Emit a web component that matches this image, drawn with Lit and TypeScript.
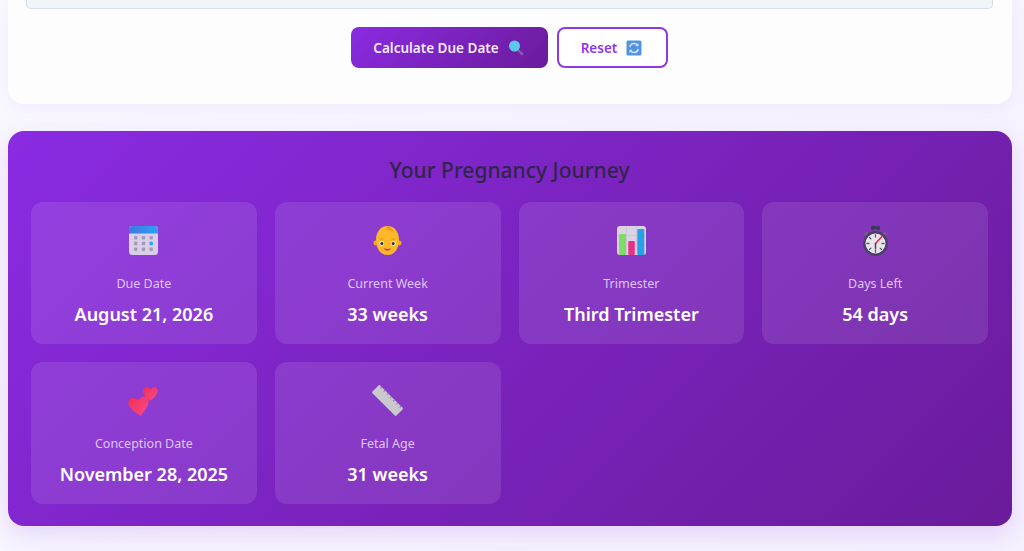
import { LitElement, html, css, svg } from "lit";
import { customElement } from "lit/decorators.js";

const heart = "M11 15.500C9 12 4.500 11 2.200 13.500C-.3 16.500 1 20.500 3.500 23.500C5.500 26 8.500 28.500 11 31C13.500 28.500 16.500 26 18.500 23.500C21 20.500 22.300 16.500 19.800 13.500C17.500 11 13 12 11 15.500z";

const icons: Record<string, unknown> = {
  calendar: svg`<svg class="ico" viewBox="0 0 31 31"><defs><linearGradient id="cb" x1="0" x2="1"><stop offset="0" stop-color="#3f78e0"/><stop offset="1" stop-color="#2ea0f5"/></linearGradient></defs><rect x="1" y="1" width="29" height="29" rx="3.500" fill="#d8cfe8"/><path d="M1 8.500V4.500A3.500 3.500 0 0 1 4.500 1h22A3.500 3.500 0 0 1 30 4.500v4z" fill="url(#cb)"/><g fill="#a79ab5"><rect x="6" y="11" width="3.400" height="3.400" rx=".7"/><rect x="13.800" y="11" width="3.400" height="3.400" rx=".7"/><rect x="21.500" y="11" width="3.400" height="3.400" rx=".7"/><rect x="6" y="16.800" width="3.400" height="3.400" rx=".7"/><rect x="13.800" y="16.800" width="3.400" height="3.400" rx=".7"/><rect x="6" y="22.500" width="3.400" height="3.400" rx=".7"/><rect x="13.800" y="22.500" width="3.400" height="3.400" rx=".7"/><rect x="21.500" y="22.500" width="3.400" height="3.400" rx=".7"/></g><rect x="21.500" y="16.800" width="3.400" height="3.400" rx=".7" fill="#2ea0f5"/></svg>`,
  baby: svg`<svg class="ico" viewBox="0 0 31 31"><circle cx="3.800" cy="18" r="2.400" fill="#f2a91e"/><circle cx="27.200" cy="18" r="2.400" fill="#f2a91e"/><path d="M15.500 1c7 0 11.500 6 11.500 14 0 9-5 15-11.500 15S4 24 4 15C4 7 8.500 1 15.500 1z" fill="#fcb827"/><path d="M15 1c3.500.8 6 3.400 6.500 7-2-2.300-4.500-3.600-8-3.700C14.500 3.500 15 2.300 15 1z" fill="#f29a18"/><circle cx="9.500" cy="18.500" r="2.400" fill="#f9f2e8"/><circle cx="21.500" cy="18.500" r="2.400" fill="#f9f2e8"/><circle cx="9.800" cy="18.500" r="1.500" fill="#3a2b2b"/><circle cx="21.200" cy="18.500" r="1.500" fill="#3a2b2b"/><path d="M7.500 14h4M19.500 14h4" stroke="#e68a2a" stroke-width=".9"/><path d="M12 23q3.500 1.800 7 0q-.8 2.800-3.500 2.800T12 23z" fill="#d8304f"/></svg>`,
  chart: svg`<svg class="ico" viewBox="0 0 31 31"><rect x="1" y="1" width="29" height="29" rx="3" fill="#d9d3e3"/><path d="M1 10.500h29M1 20h29M10.500 1v29M20.500 1v29" stroke="#c8c0d4" stroke-width=".7"/><rect x="3" y="9" width="7" height="21" rx="1" fill="#7edb63"/><rect x="12.300" y="16" width="6.500" height="14" rx="1" fill="#ea2f86"/><rect x="21.300" y="4" width="7" height="26" rx="1" fill="#27a0e8"/></svg>`,
  watch: svg`<svg class="ico" viewBox="0 0 31 31"><rect x="11" y="1" width="9" height="4" rx="1.200" fill="#3f3560"/><rect x="14" y="4" width="3" height="3.500" fill="#5a5174"/><path d="M24.500 6.500l2.500 2.500-2 2-2.500-2.500zM6.500 6.500L4 9l2 2 2.500-2.500z" fill="#6d6486"/><circle cx="15.500" cy="18.500" r="12.500" fill="#4a4068"/><circle cx="15.500" cy="18.500" r="10" fill="#e8e4ec"/><g stroke="#5c5278" stroke-width="1.300" stroke-linecap="round"><path d="M15.500 10v2M15.500 25v2M7 18.500h2M22 18.500h2M9.500 12.500l1.400 1.400M21.500 24.500l-1.400-1.400M9.500 24.500l1.400-1.400"/></g><path d="M15.500 18.500L22 11.500" stroke="#e5284f" stroke-width="1.600" stroke-linecap="round"/><path d="M15.500 18.500v5" stroke="#4a4068" stroke-width="1.500" stroke-linecap="round"/></svg>`,
  hearts: svg`<svg class="ico" viewBox="0 0 31 31"><defs><linearGradient id="hh" x1="0" y1="0" x2="1" y2="1"><stop offset="0" stop-color="#ee3050"/><stop offset="1" stop-color="#fb4a90"/></linearGradient></defs><path d=${heart} transform="translate(14.500 -6.500) scale(.72)" fill="url(#hh)"/><path d=${heart} transform="rotate(-8 11 21)" fill="url(#hh)"/></svg>`,
  ruler: svg`<svg class="ico" viewBox="0 0 31 31"><g transform="rotate(45 15.500 15.500)"><rect x="-1.500" y="10" width="34" height="11" rx="1.500" fill="#cbc7cf"/><path d="M2 10v2M6.500 10v2M11 10v2M15.500 10v2M20 10v2M24.500 10v2M29 10v2" stroke="#9a7cc8" stroke-width="1.200"/></g></svg>`,
};

const cards = [
  ["calendar", "Due Date", "August 21, 2026"],
  ["baby", "Current Week", "33 weeks"],
  ["chart", "Trimester", "Third Trimester"],
  ["watch", "Days Left", "54 days"],
  ["hearts", "Conception Date", "November 28, 2025"],
  ["ruler", "Fetal Age", "31 weeks"],
];

@customElement("app-root")
export class AppRoot extends LitElement {
  static styles = css`
    :host {
      display: block;
      height: 551px;
      overflow: hidden;
      background: linear-gradient(135deg, #f9f8fe, #f5f1fe);
      font-family: "Noto Sans", "Open Sans", sans-serif;
    }
    .page { padding: 0 12px 0 8px; }
    .form {
      height: 104px;
      box-sizing: border-box;
      background: #fdfdfe;
      border-radius: 0 0 16px 16px;
      box-shadow: 0 4px 16px rgba(138, 43, 226, 0.06);
      padding: 0 19px 0 18px;
    }
    .field {
      height: 9px;
      box-sizing: border-box;
      background: #f1f5fa;
      border: 1px solid #d6e0e8;
      border-top: 0;
      border-radius: 0 0 5px 5px;
    }
    .actions {
      display: flex;
      justify-content: center;
      gap: 9px;
      margin-top: 18px;
    }
    button {
      font: inherit;
      font-size: 13.500px;
      font-weight: 600;
      height: 41px;
      box-sizing: border-box;
      border-radius: 8px;
      display: flex;
      align-items: center;
      justify-content: center;
      gap: 9px;
      padding: 0 2px 0 0;
      white-space: nowrap;
    }
    .primary {
      width: 197px;
      border: 0;
      color: #f3e9fb;
      background: linear-gradient(135deg, #8a2be2, #6a1b9a);
    }
    .secondary {
      width: 111px;
      color: #9038e4;
      background: #fff;
      border: 2px solid #9038e4;
    }
    .small { width: 16px; height: 16px; display: block; }
    .result {
      margin-top: 27px;
      height: 395px;
      box-sizing: border-box;
      border-radius: 16px;
      padding: 24px 24px 22px 23px;
      background: linear-gradient(135deg, #8a2be2, #6a1b9a);
      box-shadow: 0 8px 24px rgba(138, 43, 226, 0.16);
    }
    h2 {
      margin: 0 0 17px;
      font-size: 21px;
      line-height: 30px;
      font-weight: 500;
      text-align: center;
      color: #2f2548;
    }
    .grid {
      display: grid;
      grid-template-columns: repeat(4, 1fr);
      gap: 18px;
    }
    .card {
      height: 142px;
      box-sizing: border-box;
      padding-top: 23px;
      border-radius: 12px;
      background: rgba(255, 255, 255, 0.1);
      display: flex;
      flex-direction: column;
      align-items: center;
      color: #fff;
    }
    .ico { width: 31px; height: 31px; display: block; }
    .label {
      margin-top: 19px;
      font-size: 12.500px;
      line-height: 18px;
      color: #ddc5f5;
    }
    .value {
      margin-top: 7px;
      font-size: 18px;
      line-height: 28px;
      font-weight: 600;
    }
  `;

  render() {
    return html`<div class="page">
      <section class="form">
        <div class="field"></div>
        <div class="actions">
          <button class="primary">Calculate Due Date
            <svg class="small" viewBox="0 0 16 16"><path d="M9.500 9.500l5.500 5.500" stroke="#8f7ca8" stroke-width="2.600" stroke-dasharray="1.200 .7"/><circle cx="6.500" cy="6" r="5.500" fill="#5cc8ea"/></svg>
          </button>
          <button class="secondary">Reset
            <svg class="small" viewBox="0 0 16 16"><rect x=".5" y=".5" width="15" height="15" rx="1.500" fill="#4f94e0"/><path d="M3.800 7A4.300 4.300 0 0 1 11.500 5.200M12.200 9A4.300 4.300 0 0 1 4.500 10.800" fill="none" stroke="#cfe4f8" stroke-width="1.500"/><path d="M12.500 3v3.200H9.400zM3.500 13V9.800h3.100z" fill="#cfe4f8"/></svg>
          </button>
        </div>
      </section>
      <section class="result">
        <h2>Your Pregnancy Journey</h2>
        <div class="grid">
          ${cards.map(
            ([icon, label, value]) => html`<div class="card">
              ${icons[icon]}
              <div class="label">${label}</div>
              <div class="value">${value}</div>
            </div>`
          )}
        </div>
      </section>
    </div>`;
  }
}
